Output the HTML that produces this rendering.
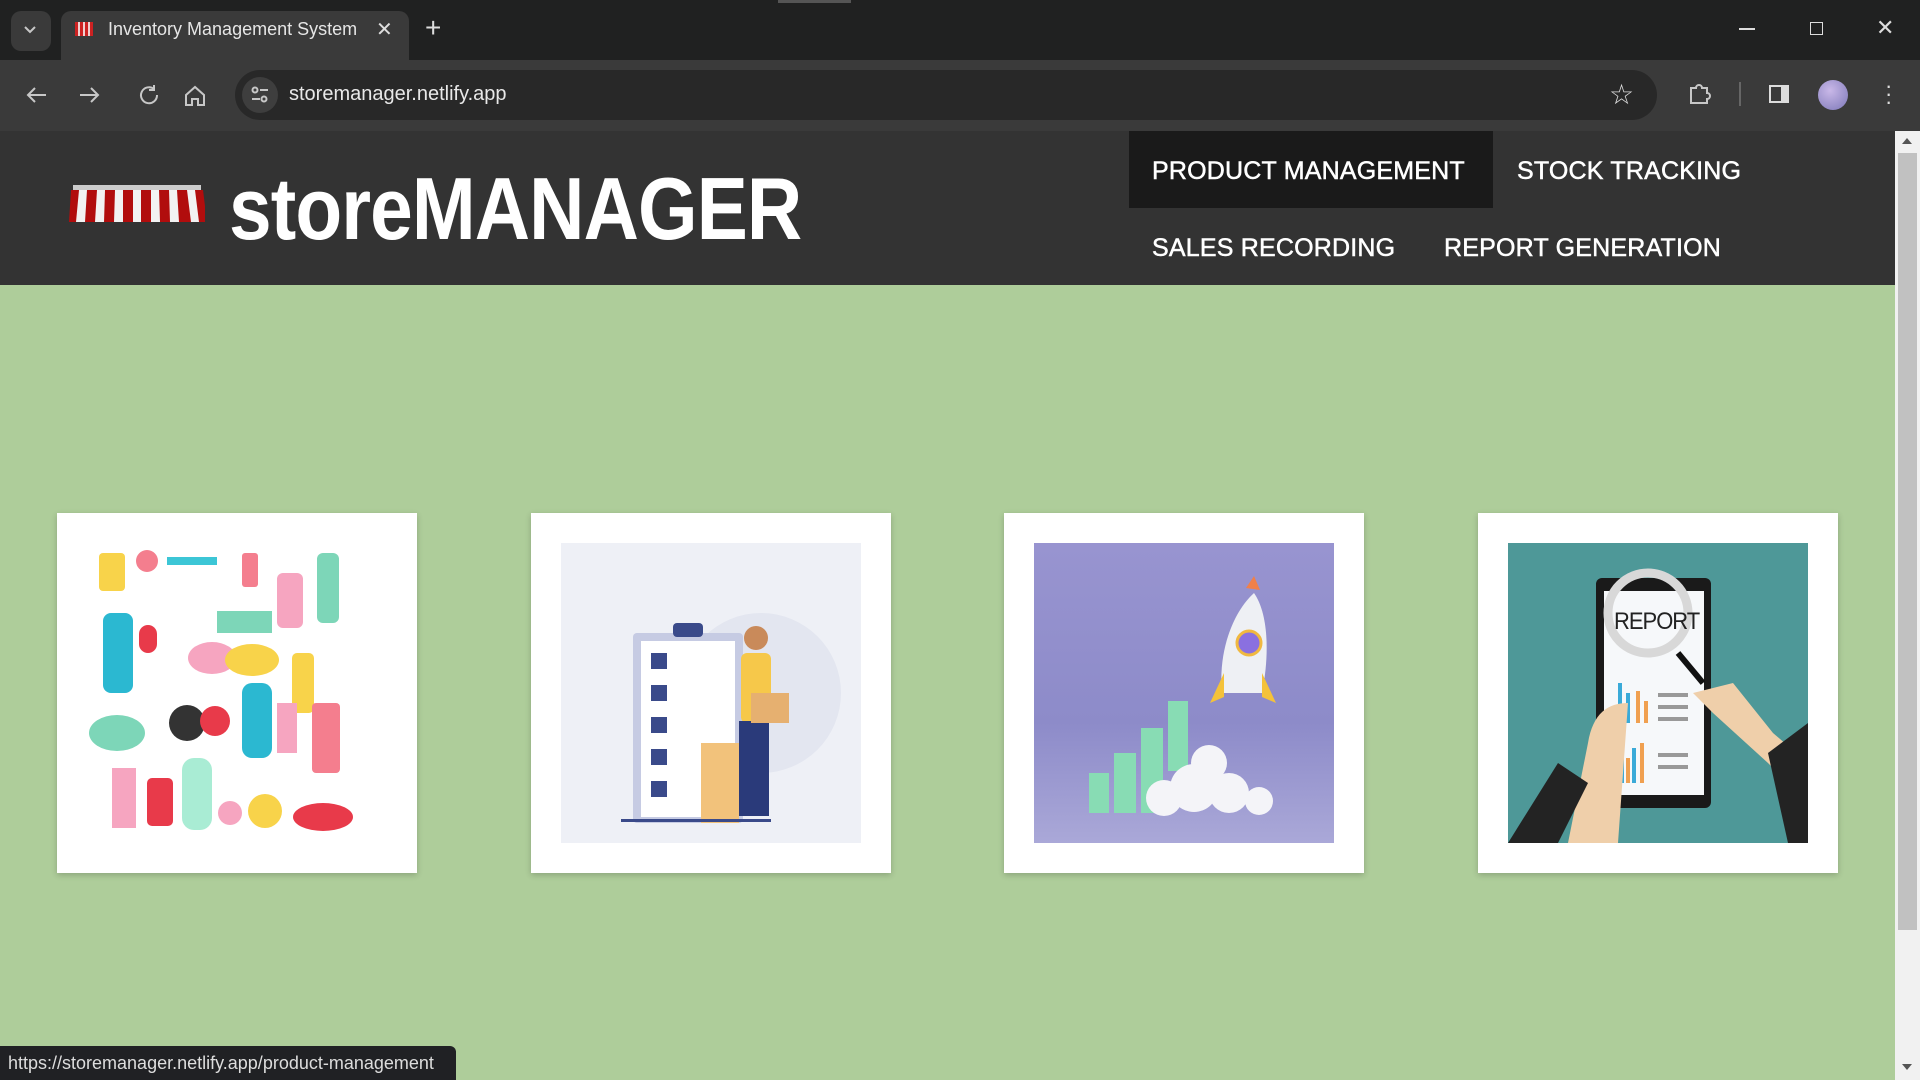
<!DOCTYPE html>
<html><head><meta charset="utf-8"><style>
*{margin:0;padding:0;box-sizing:border-box}
body{width:1920px;height:1080px;overflow:hidden;background:#aecd9a;font-family:"Liberation Sans",sans-serif;position:relative}
.abs{position:absolute}
#tabbar{left:0;top:0;width:1920px;height:60px;background:#202121}
#toolbar{left:0;top:60px;width:1920px;height:71px;background:#3a3a3a}
#header{left:0;top:131px;width:1895px;height:154px;background:#333}
.nav{position:absolute;color:#fff;font-size:25px;-webkit-text-stroke:.5px #fff;letter-spacing:.2px;white-space:nowrap}
.card{position:absolute;top:513px;width:360px;height:360px;background:#fff;box-shadow:0 2px 6px rgba(0,0,0,.2)}
.img{position:absolute;left:30px;top:30px;width:300px;height:300px;overflow:hidden}
.ic{stroke:#c7c7c7;fill:none;stroke-width:2}
</style></head><body>
<div id="tabbar" class="abs"></div>
<div class="abs" style="left:11px;top:11px;width:40px;height:40px;border-radius:10px;background:#3a3a3a"></div>
<svg class="abs" style="left:22px;top:24px" width="16" height="12"><path d="M3 3l5 5 5-5" class="ic" stroke="#ddd"/></svg>
<div class="abs" style="left:61px;top:11px;width:348px;height:49px;border-radius:10px 10px 0 0;background:#3a3a3a"></div>
<div class="abs" style="left:75px;top:22px;width:18px;height:14px;background:repeating-linear-gradient(90deg,#c22 0 3px,#f0d0d0 3px 5px)"></div>
<div class="abs" style="left:108px;top:19px;color:#e6e6e6;font-size:18px">Inventory Management System</div>
<div class="abs" style="left:376px;top:17px;color:#ddd;font-size:20px">✕</div>
<div class="abs" style="left:425px;top:12px;color:#ddd;font-size:28px;font-weight:300">+</div>
<div class="abs" style="left:778px;top:0;width:73px;height:3px;background:#555"></div>
<div class="abs" style="left:1739px;top:28px;width:16px;height:1.5px;background:#ddd"></div>
<div class="abs" style="left:1810px;top:22px;width:13px;height:13px;border:1.5px solid #ddd"></div>
<div class="abs" style="left:1876px;top:15px;color:#ddd;font-size:22px">✕</div>
<div id="toolbar" class="abs"></div>
<svg class="abs" style="left:20px;top:82px" width="240" height="26">
<path d="M26 13H8M15 6l-7 7 7 7" class="ic" stroke="#888"/>
<path d="M60 13h18M71 6l7 7-7 7" class="ic" stroke="#888"/>
<path d="M134 7a8 8 0 1 0 3 6M134 3v5h-5" class="ic"/>
<path d="M166 13l9-8 9 8v10h-6v-6h-6v6h-6z" class="ic"/>
</svg>
<div class="abs" style="left:235px;top:70px;width:1422px;height:50px;border-radius:25px;background:#282828"></div>
<div class="abs" style="left:242px;top:77px;width:36px;height:36px;border-radius:18px;background:#3e3e3e"></div>
<svg class="abs" style="left:250px;top:85px" width="20" height="20"><circle cx="5" cy="5" r="2.5" class="ic"/><path d="M10 5h8M2 14h8" class="ic"/><circle cx="14" cy="14" r="2.5" class="ic"/></svg>
<div class="abs" style="left:289px;top:83px;color:#e8e8e8;font-size:20px">storemanager.netlify.app</div>
<div class="abs" style="left:1609px;top:78px;color:#ddd;font-size:28px">☆</div>
<svg class="abs" style="left:1686px;top:80px" width="26" height="26"><path d="M5 8h5a3 3 0 0 1 6 0h5v5a3 3 0 0 1 0 6v4H5z" class="ic"/></svg>
<div class="abs" style="left:1739px;top:82px;width:2px;height:24px;background:#666"></div>
<div class="abs" style="left:1769px;top:85px;width:20px;height:18px;border:2px solid #ddd;border-right:8px solid #ddd"></div>
<div class="abs" style="left:1818px;top:80px;width:30px;height:30px;border-radius:15px;background:radial-gradient(circle at 40% 35%,#c9b8e8,#7d78b8)"></div>
<div class="abs" style="left:1885px;top:82px;color:#ddd;font-size:22px;line-height:8px;width:6px">·<br>·<br>·</div>

<div id="header" class="abs"></div>
<svg class="abs" style="left:69px;top:185px" width="136" height="40">
<rect x="4" y="0" width="128" height="5" fill="#ccc"/>
<path d="M2 5h132l4 32H0z" fill="#b10d0d"/>
<g fill="#f2f2f2"><path d="M10 5h8l-2 32h-9z"/><path d="M28 5h8l-1 32h-9z"/><path d="M46 5h8v32h-9z"/><path d="M64 5h8v32h-8z"/><path d="M82 5h8l1 32h-9z"/><path d="M100 5h8l2 32h-9z"/><path d="M118 5h8l4 32h-8z"/></g>
</svg>
<div class="abs" style="left:229px;top:158px;color:#fff;font-size:88px;font-weight:bold;letter-spacing:-1px;transform:scaleX(.87);transform-origin:left top;white-space:nowrap">storeMANAGER</div>
<div class="abs" style="left:1129px;top:131px;width:364px;height:77px;background:#1a1a1a"></div>
<div class="nav" style="left:1152px;top:157px">PRODUCT MANAGEMENT</div>
<div class="nav" style="left:1517px;top:157px">STOCK TRACKING</div>
<div class="nav" style="left:1152px;top:234px">SALES RECORDING</div>
<div class="nav" style="left:1444px;top:234px">REPORT GENERATION</div>

<div class="card" style="left:57px"><div class="img" style="background:#fff">
<svg width="300" height="300">
<rect x="12" y="10" width="26" height="38" rx="4" fill="#f8d34a"/><circle cx="60" cy="18" r="11" fill="#f47e8e"/>
<rect x="80" y="14" width="50" height="8" fill="#3cc6d6"/><rect x="155" y="10" width="16" height="34" rx="3" fill="#f47e8e"/>
<rect x="230" y="10" width="22" height="70" rx="6" fill="#7dd6b8"/><rect x="190" y="30" width="26" height="55" rx="6" fill="#f6a5c0"/>
<rect x="16" y="70" width="30" height="80" rx="8" fill="#2bb8d1"/><ellipse cx="125" cy="115" rx="24" ry="16" fill="#f6a5c0"/>
<ellipse cx="165" cy="117" rx="27" ry="16" fill="#f8d34a"/><rect x="130" y="68" width="55" height="22" fill="#7dd6b8"/>
<rect x="52" y="82" width="18" height="28" rx="9" fill="#e83a4a"/><rect x="205" y="110" width="22" height="60" rx="5" fill="#f8d34a"/>
<ellipse cx="30" cy="190" rx="28" ry="18" fill="#7dd6b8"/><circle cx="100" cy="180" r="18" fill="#333"/><circle cx="128" cy="178" r="15" fill="#e83a4a"/>
<rect x="155" y="140" width="30" height="75" rx="10" fill="#2bb8d1"/><rect x="190" y="160" width="20" height="50" fill="#f6a5c0"/>
<rect x="225" y="160" width="28" height="70" rx="4" fill="#f47e8e"/><rect x="25" y="225" width="24" height="60" fill="#f6a5c0"/>
<rect x="60" y="235" width="26" height="48" rx="5" fill="#e83a4a"/><rect x="95" y="215" width="30" height="72" rx="12" fill="#a9ecd4"/>
<circle cx="143" cy="270" r="12" fill="#f6a5c0"/><circle cx="178" cy="268" r="17" fill="#f8d34a"/><ellipse cx="236" cy="274" rx="30" ry="14" fill="#e83a4a"/>
</svg></div></div>

<div class="card" style="left:531px"><div class="img" style="background:#eef0f6">
<svg width="300" height="300"><circle cx="200" cy="150" r="80" fill="#e3e6f0"/>
<rect x="72" y="90" width="110" height="190" rx="4" fill="#c6cbe3"/><rect x="80" y="98" width="94" height="176" fill="#fff"/>
<rect x="112" y="80" width="30" height="14" rx="4" fill="#3a4a8a"/>
<g fill="#3a4a8a"><rect x="90" y="110" width="16" height="16"/><rect x="90" y="142" width="16" height="16"/><rect x="90" y="174" width="16" height="16"/><rect x="90" y="206" width="16" height="16"/><rect x="90" y="238" width="16" height="16"/></g>
<rect x="140" y="200" width="38" height="80" fill="#f2c27b"/><rect x="180" y="110" width="30" height="70" rx="6" fill="#f6c84a"/>
<rect x="178" y="178" width="30" height="95" fill="#2a3a7a"/><circle cx="195" cy="95" r="12" fill="#c98a5a"/><rect x="190" y="150" width="38" height="30" fill="#e6b070"/>
<rect x="60" y="276" width="150" height="3" fill="#3a4a8a"/></svg></div></div>

<div class="card" style="left:1004px"><div class="img" style="background:linear-gradient(180deg,#9894d0,#8d8bc9 60%,#aaa8d8)">
<svg width="300" height="300"><g fill="#88dcb4"><rect x="55" y="230" width="20" height="40"/><rect x="80" y="210" width="22" height="60"/><rect x="107" y="185" width="22" height="85"/><rect x="134" y="158" width="20" height="70"/></g>
<g fill="#f4f4f8"><circle cx="130" cy="255" r="18"/><circle cx="160" cy="245" r="24"/><circle cx="195" cy="250" r="20"/><circle cx="225" cy="258" r="14"/><circle cx="175" cy="220" r="18"/></g>
<path d="M220 50c14 20 16 60 8 100h-40c-4-40 10-80 32-100z" fill="#eef0f4"/><circle cx="215" cy="100" r="12" fill="#8a70e0" stroke="#f0b840" stroke-width="3"/>
<path d="M190 130l-14 30 14-6zM228 130l14 30-14-6z" fill="#f4c23a"/><path d="M212 45l8-12 6 14z" fill="#f0804a"/></svg></div></div>

<div class="card" style="left:1478px"><div class="img" style="background:#4e9898">
<svg width="300" height="300"><rect x="88" y="35" width="115" height="230" rx="6" fill="#1a1a1a"/><rect x="96" y="48" width="100" height="204" fill="#f6f8fa"/>
<circle cx="140" cy="70" r="40" fill="none" stroke="#d8d8d8" stroke-width="9"/>
<text x="106" y="78" font-size="22" font-family="Liberation Sans" fill="#222" transform="scale(1,1.1)" style="letter-spacing:-1px">REPORT</text>
<g fill="#3aaad8"><rect x="110" y="140" width="4" height="40"/><rect x="118" y="150" width="4" height="30"/><rect x="112" y="210" width="4" height="30"/><rect x="124" y="205" width="4" height="35"/></g>
<g fill="#f0a050"><rect x="128" y="148" width="4" height="32"/><rect x="136" y="158" width="4" height="22"/><rect x="118" y="215" width="4" height="25"/><rect x="132" y="200" width="4" height="40"/></g>
<g fill="#999"><rect x="150" y="150" width="30" height="4"/><rect x="150" y="162" width="30" height="4"/><rect x="150" y="174" width="30" height="4"/><rect x="150" y="210" width="30" height="4"/><rect x="150" y="222" width="30" height="4"/></g>
<path d="M60 300l20-100c5-30 20-40 40-40l-10 140z" fill="#efcfaa"/><path d="M0 300l50-80 30 20-30 60z" fill="#232323"/>
<path d="M185 150l40-10 40 50 35 30v40l-40-40-55-50z" fill="#efcfaa"/><path d="M260 210l40-30v120h-20z" fill="#232323"/><path d="M170 110l25 30" stroke="#111" stroke-width="6"/></svg></div></div>

<div class="abs" style="left:1895px;top:131px;width:25px;height:949px;background:#f1f1f1"></div>
<div class="abs" style="left:1898px;top:153px;width:19px;height:777px;background:#c1c1c1"></div>
<div class="abs" style="left:1902px;top:138px;width:0;height:0;border:5px solid transparent;border-bottom:6px solid #555;border-top:0"></div>
<div class="abs" style="left:1902px;top:1064px;width:0;height:0;border:5px solid transparent;border-top:6px solid #555;border-bottom:0"></div>
<div class="abs" style="left:0;top:1046px;width:456px;height:34px;background:#202124;border-radius:0 6px 0 0"></div>
<div class="abs" style="left:8px;top:1053px;color:#ddd;font-size:18px">https://storemanager.netlify.app/product-management</div>
</body></html>
